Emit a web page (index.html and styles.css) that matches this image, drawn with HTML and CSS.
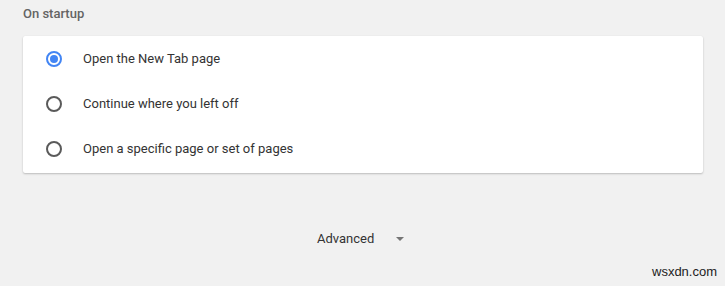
FILE: index.html
```html
<!DOCTYPE html>
<html>
<head>
<meta charset="utf-8">
<link rel="stylesheet" href="styles.css">
</head>
<body>
<div class="page">
  <h2 class="section-title">On startup</h2>
  <div class="card">
    <div class="option">
      <span class="radio checked"></span>
      <span class="label">Open the New Tab page</span>
    </div>
    <div class="option">
      <span class="radio"></span>
      <span class="label">Continue where you left off</span>
    </div>
    <div class="option">
      <span class="radio"></span>
      <span class="label">Open a specific page or set of pages</span>
    </div>
  </div>
  <div class="advanced">
    <span class="adv-label">Advanced</span>
    <svg class="arrow" width="8" height="4" viewBox="0 0 8 4"><path d="M0 0 L8 0 L4 4 Z" fill="#757575"/></svg>
  </div>
</div>
<div class="watermark">wsxdn.com</div>
</body>
</html>
```

FILE: styles.css
```css
html, body {
  margin: 0;
  padding: 0;
  background: #f1f1f1;
  width: 725px;
  height: 286px;
  overflow: hidden;
  font-family: Roboto, "Noto Sans", sans-serif;
}
.page {
  padding: 5px 22px 0 23px;
}
.section-title {
  margin: 0;
  font-size: 13px;
  font-weight: 500;
  color: #646464;
  line-height: 18px;
  height: 31px;
}
.card {
  background: #fff;
  border-radius: 2px;
  box-shadow: 0 1px 2px rgba(0,0,0,0.22), 0 0 1px rgba(0,0,0,0.06);
  height: 137px;
  box-sizing: border-box;
}
.option {
  display: flex;
  align-items: center;
  height: 45px;
  padding-left: 23px;
}
.radio {
  width: 12px;
  height: 12px;
  border: 2px solid #5a5a5a;
  border-radius: 50%;
  box-sizing: content-box;
  position: relative;
  flex: none;
}
.radio.checked {
  border-color: #4285f4;
}
.radio.checked::after {
  content: "";
  position: absolute;
  left: 2px;
  top: 2px;
  width: 8px;
  height: 8px;
  border-radius: 50%;
  background: #4285f4;
}
.label {
  margin-left: 21px;
  font-size: 13px;
  color: #333;
}
.advanced {
  display: flex;
  align-items: center;
  margin-top: 56px;
  padding-left: 294px;
  gap: 22px;
  height: 18px;
}
.adv-label {
  font-size: 13px;
  color: #333;
}
.arrow {
  display: block;
  margin-top: 1px;
}
.watermark {
  position: absolute;
  left: 652px;
  top: 264px;
  font-family: "Liberation Sans", Arial, sans-serif;
  font-size: 13px;
  color: #222;
}
```
